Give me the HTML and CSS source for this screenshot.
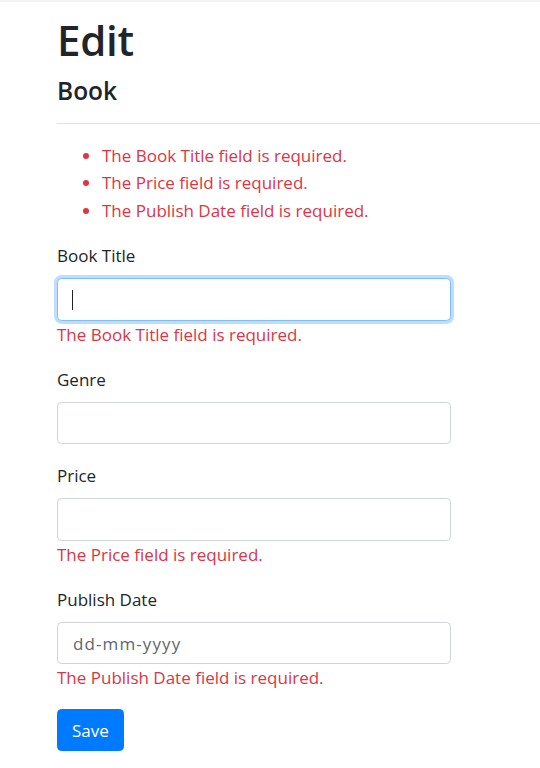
FILE: index.html
```html
<!DOCTYPE html>
<html lang="en">
<head>
<meta charset="utf-8">
<title>Edit</title>
<link rel="stylesheet" href="styles.css">
</head>
<body>
<div class="container">
  <h1 class="title">Edit</h1>
  <h4 class="subtitle">Book</h4>
  <hr class="rule">
  <ul class="summary">
    <li>The Book Title field is required.</li>
    <li>The Price field is required.</li>
    <li>The Publish Date field is required.</li>
  </ul>
  <form class="form">
    <div class="group">
      <label class="label">Book Title</label>
      <div class="field">
        <input class="control is-focus" type="text">
        <span class="caret"></span>
      </div>
      <span class="error">The Book Title field is required.</span>
    </div>
    <div class="group">
      <label class="label">Genre</label>
      <input class="control" type="text">
    </div>
    <div class="group">
      <label class="label">Price</label>
      <input class="control" type="text">
      <span class="error">The Price field is required.</span>
    </div>
    <div class="group">
      <label class="label">Publish Date</label>
      <input class="control date" type="text" placeholder="dd-mm-yyyy">
      <span class="error">The Publish Date field is required.</span>
    </div>
    <div class="group">
      <button class="btn" type="button">Save</button>
    </div>
  </form>
</div>
</body>
</html>
```
FILE: styles.css
```css
html, body {
  margin: 0;
  padding: 0;
  background: #fff;
}
body {
  font-family: "Open Sans", "Noto Sans", sans-serif;
  font-size: 17px;
  line-height: 27px;
  color: #212529;
  border-top: 2px solid #f3f3f3;
}
.container {
  padding: 12px 0 0 57px;
}
.title {
  margin: 0 0 7.8px;
  font-size: 42px;
  line-height: 52.8px;
  font-weight: 600;
  letter-spacing: -0.3px;
}
.subtitle {
  margin: 0;
  font-size: 24.5px;
  line-height: 31.7px;
  font-weight: 600;
}
.rule {
  margin: 17px 0 17.5px;
  border: 0;
  border-top: 1px solid #dfe1e3;
}
.summary {
  margin: 0 0 18px;
  padding-left: 45px;
  color: #dc3545;
}
.summary li {
  line-height: 27.5px;
}
.form {
  width: 394px;
}
.group {
  margin-bottom: 18px;
}
.label {
  display: block;
  margin-bottom: 9px;
}
.field {
  position: relative;
}
.control {
  display: block;
  box-sizing: border-box;
  width: 394px;
  height: 42.5px;
  padding: 6px 15px;
  font-family: inherit;
  font-size: 17px;
  color: #495057;
  background: #fff;
  border: 1px solid #ced4da;
  border-radius: 4.4px;
  outline: none;
}
.control::placeholder {
  color: #6c757d;
}
.control.date::placeholder {
  color: #5f666d;
  letter-spacing: 1.1px;
}
.control.is-focus {
  border-color: #80bdff;
  box-shadow: 0 0 0 3px rgba(0, 123, 255, 0.25);
}
.caret {
  position: absolute;
  left: 15px;
  top: 12px;
  width: 1px;
  height: 20px;
  background: #212529;
}
.error {
  display: block;
  color: #dc3545;
}
.btn {
  display: inline-block;
  height: 42px;
  padding: 0 14px;
  font-family: inherit;
  font-size: 17px;
  color: #fff;
  background: #007bff;
  border: 1px solid #007bff;
  border-radius: 4.4px;
}
```
